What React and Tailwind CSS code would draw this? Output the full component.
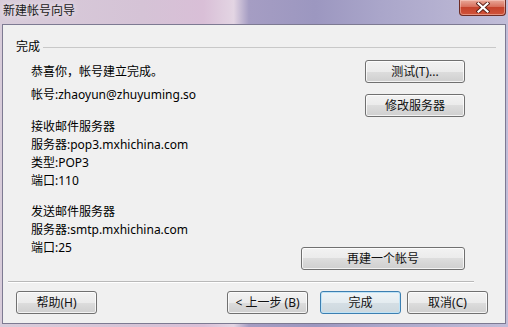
import React from 'react';

// Win7-style push button
function Btn({ children, className = '', primary = false }) {
  return (
    <button
      className={`h-[23px] shrink-0 rounded-[3px] border text-[12px] leading-none text-[#111] ${
        primary
          ? 'border-[#3c7fb1] bg-[linear-gradient(#eef4f7,#e4ecf0_50%,#d5dfe5_50%,#cdd8de)] shadow-[inset_0_0_0_1px_#bfe3f6]'
          : 'border-[#707070] bg-[linear-gradient(#f2f2f2,#ebebeb_50%,#dddddd_50%,#cfcfcf)] shadow-[inset_0_0_0_1px_rgba(255,255,255,0.75)]'
      } ${className}`}
    >
      {children}
    </button>
  );
}

function CloseButton() {
  return (
    <div className="mr-[2px] flex h-[16px] w-[47px] items-center justify-center rounded-b-[4px] border border-t-0 border-[#6e2c24] bg-[linear-gradient(#e9a899,#d8705c_45%,#c5432c_50%,#d0533a)] shadow-[inset_0_0_0_1px_rgba(255,220,210,0.45)]">
      <svg width="14" height="11" viewBox="0 0 14 11">
        <path d="M2.5 1.5 L11.5 9.5 M11.5 1.5 L2.5 9.5" stroke="#5a2018" strokeWidth="4" strokeLinecap="square" />
        <path d="M2.5 1.5 L11.5 9.5 M11.5 1.5 L2.5 9.5" stroke="#fff" strokeWidth="2.2" strokeLinecap="square" />
      </svg>
    </div>
  );
}

export default function App() {
  const font = "font-['Noto_Sans','Noto_Sans_CJK_SC',sans-serif]";

  return (
    <div
      className={`flex h-[327px] w-[508px] flex-col overflow-hidden bg-[linear-gradient(90deg,#d8ccda_0%,#d5c3d6_28%,#d9bfd7_40%,#e3d5e3_46%,#a59dc3_49%,#9c97c0_62%,#aaa6ca_75%,#c1bdd8_100%)] ${font}`}
    >
      {/* title bar */}
      <div className="flex h-[24px] items-start justify-between">
        <div className="pl-[3px] pt-[3px] text-[12px] leading-[16px] text-[#1a1a1a] [text-shadow:0_0_6px_rgba(255,255,255,0.9)]">
          新建帐号向导
        </div>
        <CloseButton />
      </div>

      {/* client area */}
      <div className="mx-[2px] flex h-[300px] flex-col border border-[#7d7a92] bg-[#f0f0f0] text-[12px] text-[#000]">
        {/* group header */}
        <div className="flex items-center pl-[13px] pr-[9px] pt-[14px]">
          <span className="leading-[16px]">完成</span>
          <div className="ml-[3px] h-px flex-1 bg-[#c8c8c8]" />
        </div>

        {/* body */}
        <div className="mt-[5px] flex justify-between pl-[28px] pr-[40px]">
          <div className="flex flex-col pt-[3px] leading-[18px]">
            <div>恭喜你，帐号建立完成。</div>
            <div className="mt-[5px]">帐号:zhaoyun@zhuyuming.so</div>
            <div className="mt-[14px]">接收邮件服务器</div>
            <div>服务器:pop3.mxhichina.com</div>
            <div>类型:POP3</div>
            <div>端口:110</div>
            <div className="mt-[13px]">发送邮件服务器</div>
            <div>服务器:smtp.mxhichina.com</div>
            <div>端口:25</div>
          </div>
          <div className="flex flex-col items-end">
            <Btn className="w-[100px]">测试(T)...</Btn>
            <Btn className="mt-[11px] w-[100px]">修改服务器</Btn>
            <Btn className="mt-[130px] w-[164px]">再建一个帐号</Btn>
          </div>
        </div>

        {/* separator */}
        <div className="ml-[5px] mt-[11px] w-[466px] border-t border-b border-t-[#b9b9b9] border-b-white" />

        {/* bottom buttons */}
        <div className="mt-[8px] flex items-center pl-[13px] pr-[17px]">
          <Btn className="w-[81px]">帮助(H)</Btn>
          <Btn className="ml-auto w-[81px]">&lt; 上一步 (B)</Btn>
          <Btn primary className="ml-[12px] w-[81px]">完成</Btn>
          <Btn className="ml-[6px] w-[81px]">取消(C)</Btn>
        </div>
      </div>
    </div>
  );
}
